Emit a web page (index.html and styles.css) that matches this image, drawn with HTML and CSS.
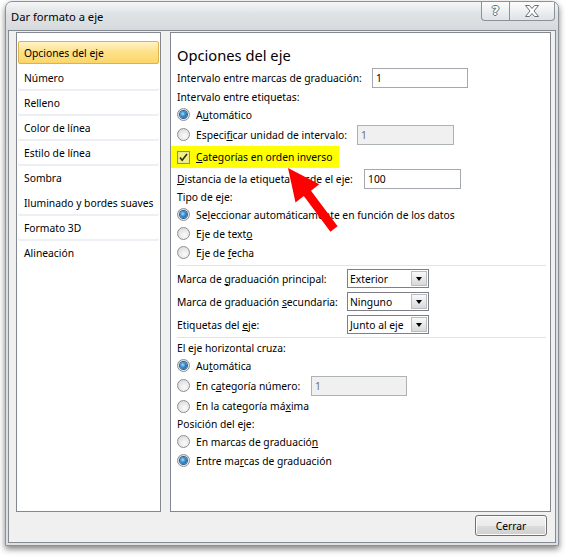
FILE: index.html
```html
<!DOCTYPE html>
<html lang="es">
<head>
<meta charset="utf-8">
<title>Dar formato a eje</title>
<link rel="stylesheet" href="styles.css">
</head>
<body>
<div class="window">
  <div class="titlebar">
    <span class="title">Dar formato a eje</span>
    <div class="capbtns">
      <div class="capbtn help"><span class="glyph">?</span></div>
      <div class="capbtn close">
        <svg width="16" height="14" viewBox="0 0 16 14"><path d="M1.5 1.5h4l2.5 3 2.5-3h4l-4.5 5.5 4.5 5.5h-4l-2.5-3-2.5 3h-4l4.5-5.5z" fill="#fff" stroke="#6b7078" stroke-width="1" stroke-linejoin="round"/></svg>
      </div>
    </div>
  </div>
  <div class="client">
    <div class="panels">
      <div class="nav">
        <div class="item selected">Opciones del eje</div>
        <div class="item grp">Número</div>
        <div class="item grp">Relleno</div>
        <div class="item grp">Color de línea</div>
        <div class="item grp">Estilo de línea</div>
        <div class="item">Sombra</div>
        <div class="item grp">Iluminado y bordes suaves</div>
        <div class="item grp">Formato 3D</div>
        <div class="item">Alineación</div>
      </div>
      <div class="content">
        <div class="heading">Opciones del eje</div>
        <div class="row h20"><span class="lbl w195"><span>Intervalo entre marcas de <u>g</u>raduación:</span></span><span class="field w96">1</span></div>
        <div class="row h18"><span>Intervalo entre etiquetas:</span></div>
        <div class="row h17"><span class="radio on"></span><span>A<u>u</u>tomático</span></div>
        <div class="row h23"><span class="lbl w180"><span class="radio"></span><span>Especi<u>f</u>icar unidad de intervalo:</span></span><span class="field w97 dis">1</span></div>
        <div class="row h22 hl"><span class="check"><svg width="9" height="9" viewBox="0 0 9 9"><path d="M1 4.5l2.2 2.8L8 1" fill="none" stroke="#2b2b1a" stroke-width="1.6"/></svg></span><span><u>C</u>ategorías en orden inverso</span></div>
        <div class="row h21"><span class="lbl w187"><span><u>D</u>istancia de la etiqueta desde el eje:</span></span><span class="field w97">100</span></div>
        <div class="row h16"><span>Tipo de eje:</span></div>
        <div class="row h19"><span class="radio on"></span><span>Se<u>l</u>eccionar automáticamente en función de los datos</span></div>
        <div class="row h19"><span class="radio"></span><span>Eje de text<u>o</u></span></div>
        <div class="row h19"><span class="radio"></span><span>Eje de <u>f</u>echa</span></div>
        <div class="sep s1"></div>
        <div class="row h23"><span class="lbl w170"><span>Marca de <u>g</u>raduación principal:</span></span><span class="select"><span class="val">Exterior</span><span class="drop"></span></span></div>
        <div class="row h23"><span class="lbl w170"><span>Marca de graduación <u>s</u>ecundaria:</span></span><span class="select"><span class="val">Ninguno</span><span class="drop"></span></span></div>
        <div class="row h23"><span class="lbl w170"><span>Etiquetas del <u>e</u>je:</span></span><span class="select"><span class="val">Junto al eje</span><span class="drop"></span></span></div>
        <div class="sep s2"></div>
        <div class="row h18"><span>El eje horizontal cruza:</span></div>
        <div class="row h17"><span class="radio on"></span><span>Au<u>t</u>omática</span></div>
        <div class="row h23"><span class="lbl w134"><span class="radio"></span><span>En c<u>a</u>tegoría número:</span></span><span class="field w96 dis">1</span></div>
        <div class="row h18"><span class="radio"></span><span>En la categoría má<u>x</u>ima</span></div>
        <div class="row h17"><span>Posición del eje:</span></div>
        <div class="row h19"><span class="radio"></span><span>En marcas de graduació<u>n</u></span></div>
        <div class="row h19"><span class="radio on"></span><span>Entre ma<u>r</u>cas de graduación</span></div>
      </div>
    </div>
    <div class="footer">
      <div class="button">Cerrar</div>
    </div>
  </div>
</div>
<svg class="arrow" width="569" height="558" viewBox="0 0 569 558"><polygon points="288,168 319.3,184.3 311,190.7 337.6,226.3 330.4,231.7 303.8,196.1 295.5,202.5" fill="#ff0000"/></svg>
</body>
</html>
```
FILE: styles.css
```css
* { box-sizing: border-box; }
html, body { margin: 0; padding: 0; background: #fff; }
body {
  position: relative;
  width: 569px;
  height: 558px;
  overflow: hidden;
  font-family: "Noto Sans", "Open Sans", sans-serif;
  font-size: 10.3px;
  color: #000;
}
u { text-decoration: underline; text-underline-offset: 1px; }

.window {
  margin: 1px 0 0 5px;
  width: 554px;
  height: 545px;
  border: 1px solid #8d9298;
  border-radius: 7px 7px 0 0;
  background: linear-gradient(#f4f5f6 0, #e0e3e6 12px, #d6dade 28px, #dde0e3 100%);
  box-shadow: 0 3px 6px rgba(0,0,0,.5);
  padding: 0 2px 2px 2px;
  display: flex;
  flex-direction: column;
}

.titlebar {
  height: 28px;
  display: flex;
  justify-content: space-between;
  align-items: flex-start;
}
.title {
  margin: 7px 0 0 3px;
  font-size: 11.2px;
  line-height: 16px;
}
.capbtns { display: flex; margin-right: 1px; }
.capbtn {
  height: 19px;
  border: 1px solid #8b929a;
  border-top: none;
  background: linear-gradient(rgba(255,255,255,.75), rgba(225,229,233,.7));
  display: flex;
  align-items: center;
  justify-content: center;
}
.capbtn.help { width: 28px; border-radius: 0 0 0 4px; border-right: none; }
.capbtn.close { width: 46px; border-radius: 0 0 4px 0; }
.glyph {
  font-family: "DejaVu Sans", sans-serif;
  font-weight: bold;
  font-size: 13px;
  color: #fff;
  text-shadow: 1px 0 0 #6b7078, -1px 0 0 #6b7078, 0 1px 0 #6b7078, 0 -1px 0 #6b7078;
  line-height: 14px;
}

.client {
  flex: 1;
  background: #f0f0f0;
  border: 1px solid #848a91;
  padding: 1px 4px 0 7px;
  display: flex;
  flex-direction: column;
}
.panels { display: flex; gap: 9px; height: 480px; }

.nav {
  width: 145px;
  background: #fff;
  border: 1px solid #828790;
  padding: 8px 1px 0 1px;
}
.item {
  height: 23px;
  margin-bottom: 2px;
  border: 1px solid transparent;
  border-radius: 2px;
  padding-left: 5px;
  display: flex;
  align-items: center;
}
.item.grp { box-shadow: 0 2px 0 #eeeff4; }
.item.selected {
  background: linear-gradient(#fff4c8, #fde28c 45%, #fcd567 100%);
  border-color: #dcb14e;
}

.content {
  width: 381px;
  background: #fff;
  border: 1px solid #828790;
  padding: 10px 0 0 6px;
}
.heading { height: 25px; line-height: 25px; font-size: 14.7px; }
.row { display: flex; align-items: center; white-space: nowrap; }
.h16 { height: 16px; }
.h17 { height: 17px; }
.h18 { height: 18px; }
.h19 { height: 19px; }
.h20 { height: 20px; }
.h21 { height: 21px; }
.h22 { height: 22px; }
.h23 { height: 23px; }
.lbl { display: flex; align-items: center; flex: none; }
.w134 { width: 134px; }
.w170 { width: 170px; }
.w180 { width: 180px; }
.w187 { width: 187px; }
.w195 { width: 195px; }

.hl { background: #ffff00; margin-left: -6px; padding-left: 6px; width: 168px; }

.field {
  height: 20px;
  border: 1px solid #a5a9ae;
  background: #fff;
  padding-left: 3px;
  display: flex;
  align-items: center;
}
.w96 { width: 96px; }
.w97 { width: 97px; }
.field.dis { background: #f0f0f0; color: #6d6d6d; border-color: #adb2b5; }

.radio {
  width: 13px;
  height: 13px;
  border-radius: 50%;
  border: 1px solid #8d8f92;
  background: radial-gradient(circle at 60% 65%, #fbfbfb 0, #e6e6e6 55%, #d3d3d3 100%);
  margin-right: 6px;
  flex: none;
  display: flex;
  align-items: center;
  justify-content: center;
}
.radio.on::after {
  content: "";
  width: 7px;
  height: 7px;
  border-radius: 50%;
  background: radial-gradient(circle at 40% 40%, #9be3ff 0, #3a8fd3 40%, #17457d 100%);
  box-shadow: 0 0 0 1px #2a5b92;
}

.check {
  width: 13px;
  height: 13px;
  border: 1px solid #8e8f5c;
  box-shadow: inset 0 0 0 1px #e7e79a;
  background: #f4f470;
  margin-right: 6px;
  flex: none;
  display: flex;
  align-items: center;
  justify-content: center;
}

.sep { border-top: 1px solid #e3e3e3; margin-right: 4px; height: 1px; }
.s1 { margin-top: 3px; margin-bottom: 1px; }
.s2 { margin-top: 1px; margin-bottom: 1px; }

.select {
  width: 82px;
  height: 19px;
  border: 1px solid #7d8187;
  background: #fff;
  display: flex;
  align-items: center;
  padding: 1px;
}
.select .val { flex: 1; padding-left: 1px; }
.select .drop {
  width: 16px;
  height: 15px;
  border: 1px solid #b9bcc0;
  background: linear-gradient(#fafafa, #e9e9e9 50%, #d8d8d8 100%);
  display: flex;
  align-items: center;
  justify-content: center;
}
.select .drop::after {
  content: "";
  border-left: 3.5px solid transparent;
  border-right: 3.5px solid transparent;
  border-top: 4px solid #000;
}

.footer { display: flex; justify-content: flex-end; padding-top: 3px; }
.button {
  width: 72px;
  height: 21px;
  margin-right: 4px;
  border: 1px solid #707070;
  border-radius: 3px;
  background: linear-gradient(#f2f2f2 0, #ebebeb 50%, #dddddd 51%, #cfcfcf 100%);
  box-shadow: inset 0 0 0 1px #fcfcfc;
  display: flex;
  align-items: center;
  justify-content: center;
}

.arrow { position: absolute; left: 0; top: 0; pointer-events: none; }
```
